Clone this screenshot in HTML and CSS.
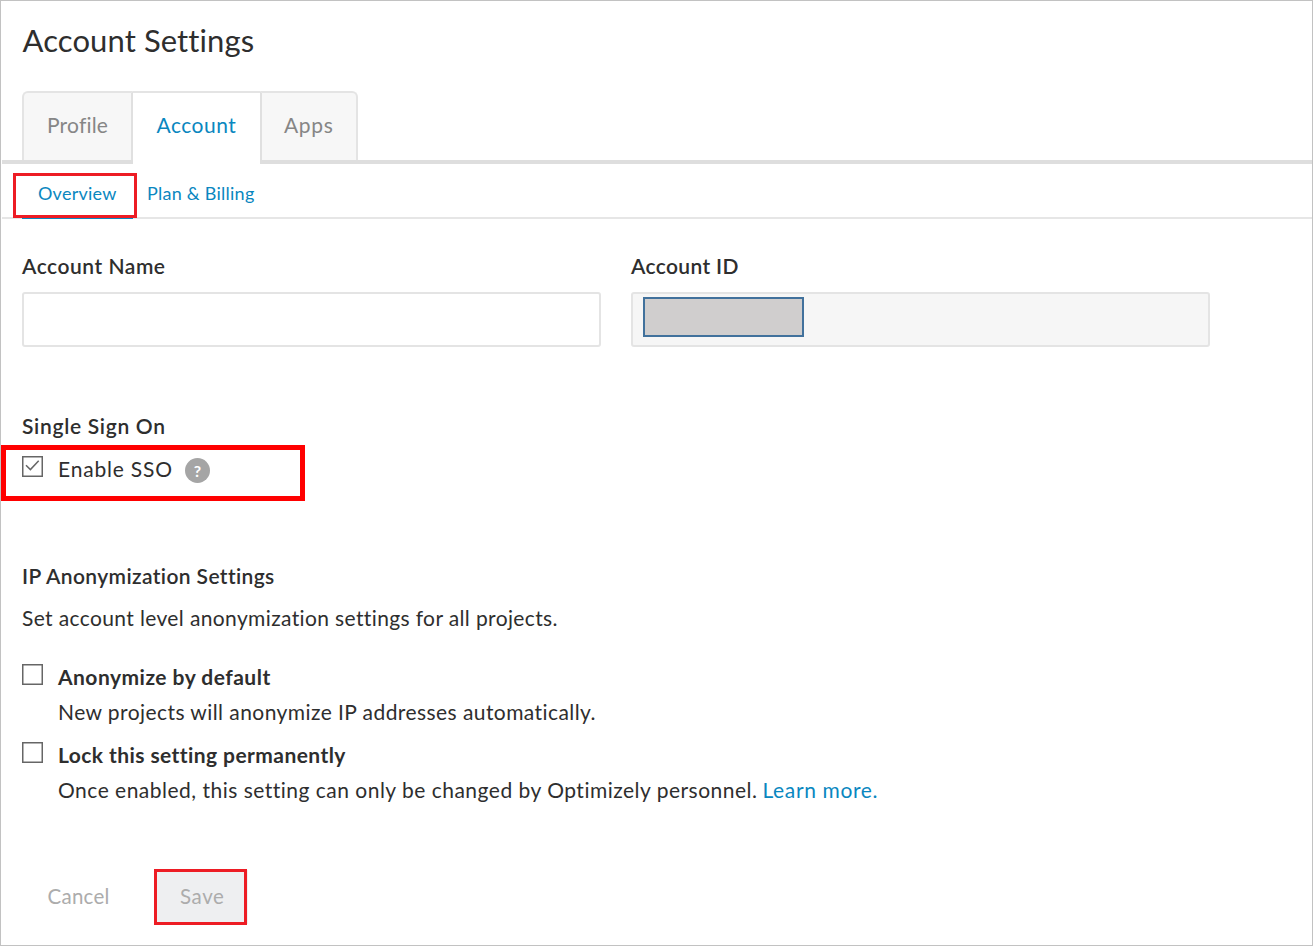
FILE: index.html
```html
<!DOCTYPE html>
<html lang="en">
<head>
<meta charset="utf-8">
<title>Account Settings</title>
<link rel="stylesheet" href="styles.css">
</head>
<body>
<main class="page">
  <h1 class="title"><span class="t-title">Account Settings</span></h1>

  <nav class="tabs">
    <a class="tab tab-profile"><span class="t-profile">Profile</span></a>
    <a class="tab tab-account"><span class="t-account">Account</span></a>
    <a class="tab tab-apps"><span class="t-apps">Apps</span></a>
  </nav>

  <nav class="subnav">
    <a class="sub sub-active"><span class="t-overview">Overview</span><i class="mark mark-overview"></i></a>
    <a class="sub"><span class="t-plan">Plan &amp; Billing</span></a>
  </nav>

  <section class="fields">
    <div class="field">
      <label class="label"><span class="t-name">Account Name</span></label>
      <div class="input"></div>
    </div>
    <div class="field">
      <label class="label"><span class="t-id">Account ID</span></label>
      <div class="input input-disabled"><div class="redacted"></div></div>
    </div>
  </section>

  <section class="sso">
    <h2 class="label"><span class="t-sso">Single Sign On</span></h2>
    <div class="sso-row">
      <svg class="check" viewBox="0 0 21 21"><rect x=".75" y=".75" width="19.5" height="19.5"/><path d="M4 9.3l4.4 4.3 8.3-8.8"/></svg>
      <span class="t-enable">Enable SSO</span>
      <span class="help">?</span>
      <i class="mark mark-sso"></i>
    </div>
  </section>

  <section class="anon">
    <h2 class="label"><span class="t-ip">IP Anonymization Settings</span></h2>
    <p class="intro"><span class="t-set">Set account level anonymization settings for all projects.</span></p>
    <div class="option">
      <svg class="check" viewBox="0 0 21 21"><rect x=".75" y=".75" width="19.5" height="19.5"/></svg>
      <div>
        <h3 class="option-name"><span class="t-anon">Anonymize by default</span></h3>
        <p class="option-text"><span class="t-new">New projects will anonymize IP addresses automatically.</span></p>
      </div>
    </div>
    <div class="option">
      <svg class="check" viewBox="0 0 21 21"><rect x=".75" y=".75" width="19.5" height="19.5"/></svg>
      <div>
        <h3 class="option-name"><span class="t-lock">Lock this setting permanently</span></h3>
        <p class="option-text"><span class="t-once">Once enabled, this setting can only be changed by Optimizely personnel.</span><a class="t-learn">Learn more.</a></p>
      </div>
    </div>
  </section>

  <footer class="actions">
    <span class="cancel">Cancel</span>
    <span class="save"><span class="t-save">Save</span></span>
  </footer>
</main>
</body>
</html>
```
FILE: styles.css
```css
* { box-sizing: border-box; }
body { margin: 0; background: #fff; }
h1, h2, h3, p { margin: 0; font-weight: inherit; font-size: inherit; }
.page {
  width: 1313px; height: 946px; border: 1px solid #c2c2c2; overflow: hidden;
  font-family: Lato, "Open Sans", sans-serif; font-size: 21px; line-height: 30px;
  font-variant-ligatures: none; color: #2e2e2e; white-space: nowrap;
}
.title { padding: 19px 0 0 21.5px; height: 90px; font-size: 31px; line-height: 40px; }

.tabs {
  display: flex; height: 74px; margin-left: 1px; padding-left: 20px;
  background: linear-gradient(#dedede, #dedede) 0 69px / 100% 4px no-repeat;
  color: #868686; font-size: 21px; line-height: 64px;
}
.tab { height: 69px; border-top: 2px solid #e4e4e4; background: #f7f7f7; }
.tab-profile { width: 111px; padding-left: 23px; border-left: 2px solid #e4e4e4; border-right: 2px solid #e0e0e0; border-radius: 6px 0 0 0; }
.tab-account { width: 127px; height: 74px; padding-left: 23.5px; background: #fff; color: #0a87bf; }
.tab-apps { width: 98px; padding-left: 22px; border-left: 2px solid #e0e0e0; border-right: 2px solid #e4e4e4; border-radius: 0 6px 0 0; }

.subnav {
  display: flex; height: 54px; margin-left: 1px; padding-left: 20px;
  border-bottom: 2px solid #e6e6e6; color: #0a87bf; font-size: 18px; line-height: 57px;
}
.sub { height: 54px; }
.sub-active { position: relative; width: 111px; margin-right: 14px; padding-left: 16px; border-bottom: 2px solid #0a87bf; }

.mark { position: absolute; display: block; border: 3px solid #ed1c24; }
.mark-overview { left: -9px; top: 8px; width: 124px; height: 45px; }
.mark-sso { left: -21px; top: -3px; width: 304px; height: 56px; border: 5px solid #f00; }

.fields { display: flex; gap: 30px; padding: 32px 0 0 21px; height: 128px; }
.field { width: 579px; }
.label { display: block; height: 30px; font-weight: 600; }
.input { height: 55px; margin-top: 11px; border: 2px solid #e4e4e4; border-radius: 3px; }
.input-disabled { padding: 3px 0 0 10px; background: #f6f6f6; }
.redacted { width: 161px; height: 40px; background: #d0cece; border: 2px solid #41719c; }

.sso { padding: 64px 0 0 21px; }
.sso-row { position: relative; display: flex; height: 80px; margin-top: 7px; }
.check { flex: none; width: 21px; height: 21px; margin: 8px 15px 0 0; fill: #fff; stroke: #666; stroke-width: 1.5; }
.help {
  width: 25px; height: 25px; margin: 10px 0 0; border-radius: 50%;
  background: #a5a5a5; color: #fff; font-size: 16px; font-weight: 700; line-height: 25px; text-align: center;
}
.sso-row > .t-enable { width: 127px; padding-top: 6px; }

.anon { padding: 33px 0 0 21px; }
.intro { padding-top: 12px; height: 71px; }
.option { display: flex; height: 78px; }
.option .check { margin-top: 2px; }
.option-name { height: 34.5px; font-weight: 700; }
.option-text { height: 30px; }

.actions { display: flex; padding: 51px 0 0 21px; color: #acacac; font-size: 20.5px; }
.cancel { width: 132px; padding: 12px 0 0 25.5px; letter-spacing: .25px; }
.save { width: 93px; height: 56px; padding: 9px 0 0 23px; border: 3px solid #ed1c24; background: #eeeff1; box-shadow: 2px 0 0 -1px #eeeff1; }

/* Tracking per string */
.t-title { letter-spacing: .1px; }
.t-profile { letter-spacing: .2px; }
.t-account { letter-spacing: .5px; }
.t-apps { letter-spacing: .7px; }
.t-overview { letter-spacing: .25px; }
.t-plan { letter-spacing: .25px; }
.t-name { letter-spacing: .53px; }
.t-id { letter-spacing: .36px; }
.t-sso { letter-spacing: .7px; }
.t-enable { letter-spacing: .8px; }
.t-ip { letter-spacing: .39px; }
.t-set { letter-spacing: .37px; }
.t-anon { letter-spacing: .48px; }
.t-new { letter-spacing: .43px; }
.t-lock { letter-spacing: .42px; }
.t-once { letter-spacing: .49px; }
.t-learn { margin-left: 5px; letter-spacing: .63px; color: #0a87bf; }
.t-save { letter-spacing: .6px; }
```
